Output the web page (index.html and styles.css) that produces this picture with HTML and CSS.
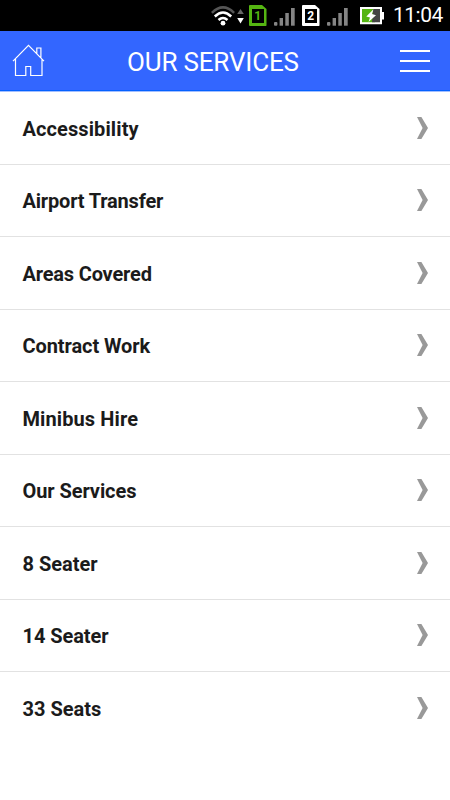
FILE: index.html
```html
<!DOCTYPE html>
<html lang="en">
<head>
<meta charset="utf-8">
<title>Our Services</title>
<link rel="stylesheet" href="styles.css">
</head>
<body>
<svg width="0" height="0" class="defs">
  <symbol id="signal" viewBox="0 0 21 20">
    <rect x="0" y="16" width="3.4" height="3.7" rx="1"/><rect x="5.6" y="12" width="3.4" height="7.7"/><rect x="11.3" y="7" width="3.5" height="12.7"/><rect x="17" y="2" width="3.7" height="17.7"/>
  </symbol>
  <symbol id="chevron" viewBox="0 0 12 22"><path d="M0 0H4.4L11 11L4.4 22H0L5.6 11Z"/></symbol>
</svg>
<div class="status">
  <svg class="wifi" width="33" height="20" viewBox="0 0 33 20">
    <g fill="none" stroke-width="2.5">
      <path stroke="#555" d="M.9 6.8Q12 -4 23.1 6.8"/>
      <path stroke="#fff" d="M3.8 10.5Q12 2.5 20.2 10.5M7.5 14Q12 10 16.5 14"/>
    </g>
    <circle cx="12" cy="17.2" r="2.4" fill="#fff"/>
    <path fill="#666" d="M26.2 8L29.5 3L32.8 8Z"/><path fill="#fff" d="M26.2 12L29.5 17.5L32.8 12Z"/>
  </svg>
  <span class="sim sim-green">1</span>
  <svg class="signal" width="21" height="20"><use href="#signal"/></svg>
  <span class="sim">2</span>
  <svg class="signal" width="21" height="20"><use href="#signal"/></svg>
  <svg class="battery" width="25" height="18" viewBox="0 0 25 18">
    <path fill="#fff" d="M0 0H22V5H24V12.5H22V17.2H0Z"/>
    <path fill="#55b512" d="M2 2H15V15.2H2Z"/><path fill="#444" d="M13 2H20V15.2H12Z"/>
    <path fill="#fff" d="M13.5 2.3L6.3 9.5L10 10.5L8.5 15L16 8.2L12 7Z"/>
  </svg>
  <time>11:04</time>
</div>
<header>
  <svg class="home" width="34" height="34" viewBox="0 0 34 34"><path d="M1 17.2L16.5 1.4L32 17.2M3.5 15V31.5H13.8V22.5H18.7V31.5H30V15M24.8 9.5V4H28.9V13.6"/></svg>
  <h1>OUR SERVICES</h1>
  <div class="menu"><i></i><i></i><i></i></div>
</header>
<ul>
  <li class="wide">Accessibility<svg><use href="#chevron"/></svg></li>
  <li class="narrow">Airport Transfer<svg><use href="#chevron"/></svg></li>
  <li class="narrow">Areas Covered<svg><use href="#chevron"/></svg></li>
  <li class="snug">Contract Work<svg><use href="#chevron"/></svg></li>
  <li class="wide">Minibus Hire<svg><use href="#chevron"/></svg></li>
  <li class="snug">Our Services<svg><use href="#chevron"/></svg></li>
  <li>8 Seater<svg><use href="#chevron"/></svg></li>
  <li class="snug">14 Seater<svg><use href="#chevron"/></svg></li>
  <li>33 Seats<svg><use href="#chevron"/></svg></li>
</ul>
</body>
</html>
```
FILE: styles.css
```css
* { box-sizing: border-box; }
body { margin: 0; height: 800px; overflow: hidden; background: #fff; font-family: Roboto, sans-serif; }
.defs { display: block; }
.status { height: 31px; display: flex; align-items: center; background: #000; color: #fff; padding-left: 211px; }
.sim { width: 17.5px; height: 21px; margin: 0 .5px 0 5px; border: solid #fff; border-width: 4px 3px 3px; border-radius: 1px; clip-path: polygon(0 0, 13px 0, 100% 4px, 100% 100%, 0 100%); font: bold 12px/14px Roboto, sans-serif; text-align: center; }
.sim-green { border-color: #55b512; color: #55b512; }
.signal { margin-left: 7px; fill: #858585; }
.signal + .sim { margin-left: 7px; }
.battery { margin-left: 12px; }
time { margin-left: 8px; font-size: 21px; letter-spacing: -.5px; line-height: 31px; white-space: nowrap; }
header { height: 61px; display: flex; align-items: center; background: #36f; border-bottom: 1px solid #a3bfff; box-shadow: inset 0 -1px #0561ff; }
.home { margin-left: 11.5px; fill: none; stroke: #fff; stroke-width: 1.2; }
h1 { width: 172px; margin: 2px 0 0 81.5px; color: #fff; font-size: 26px; font-weight: 400; letter-spacing: -.18px; line-height: 30px; white-space: nowrap; }
.menu { width: 30px; margin-left: 101px; display: grid; gap: 8px; }
.menu i { height: 2px; background: #fff; }
ul { list-style: none; margin: 0; padding: 0; }
li { height: 72.5px; display: flex; align-items: center; justify-content: space-between; padding: 2px 21.5px 0 22.5px; border-bottom: 1px solid #e2e2e2; color: #1b1b1b; font-size: 20px; font-weight: 700; }
li:last-child { border-bottom: 0; }
li svg { width: 12px; height: 22px; margin-top: -2px; fill: #999; }
.wide { letter-spacing: .1px; }
.snug { letter-spacing: -.08px; }
.narrow { letter-spacing: -.18px; }
```
